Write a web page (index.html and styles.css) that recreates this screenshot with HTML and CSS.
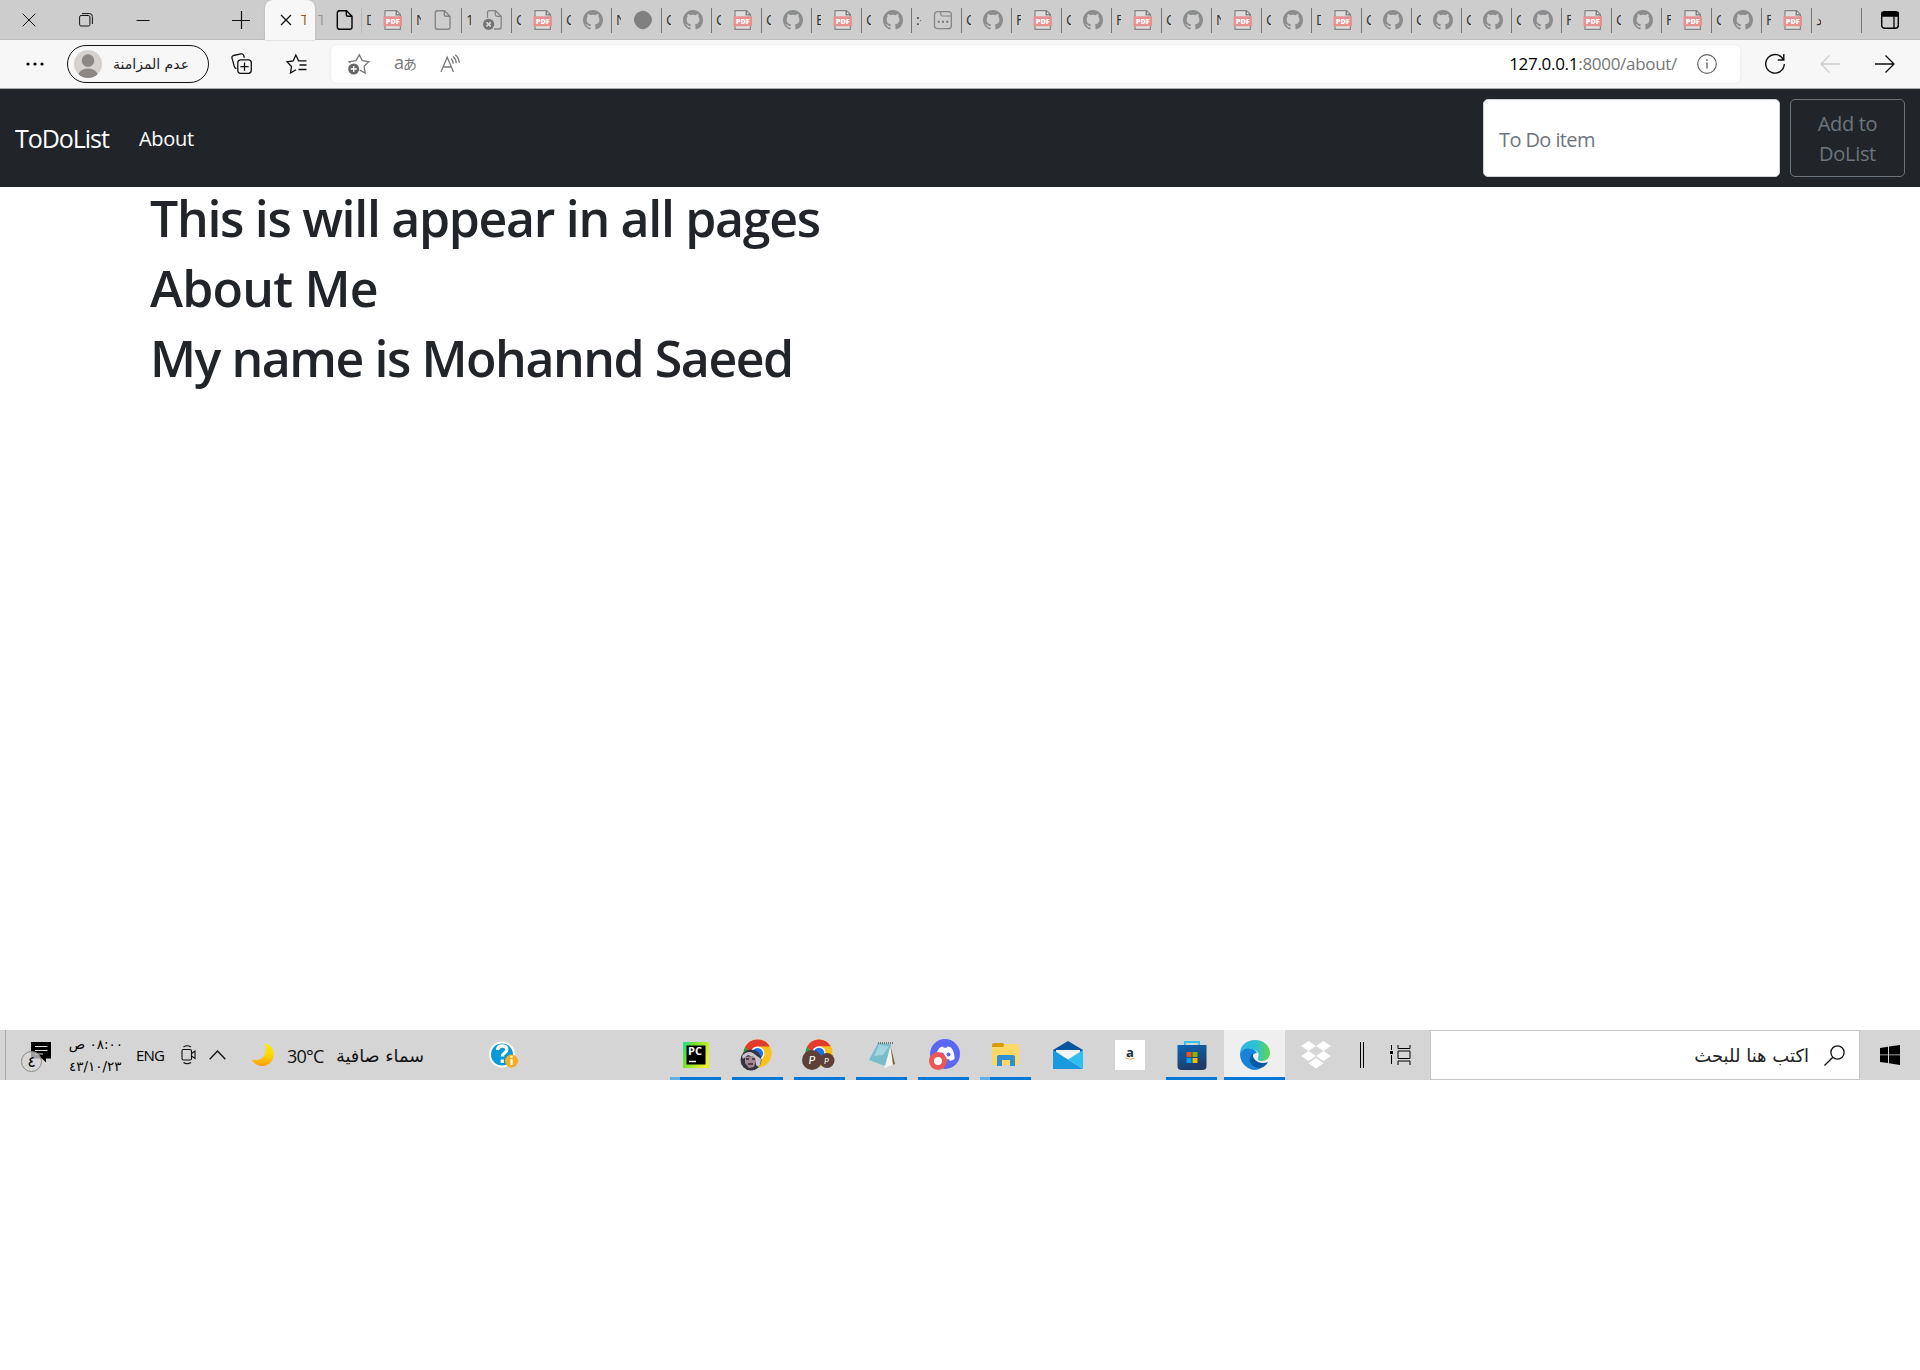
FILE: index.html
```html
<!DOCTYPE html>
<html lang="en">
<head>
<meta charset="utf-8">
<title>ToDoList</title>
<link rel="stylesheet" href="styles.css">
</head>
<body>
<svg class="defs" width="0" height="0">
  <symbol id="github" viewBox="0 0 16 16"><path fill="#8b8c8e" fill-rule="evenodd" d="M8 0C3.58 0 0 3.58 0 8c0 3.54 2.29 6.53 5.47 7.59.4.07.55-.17.55-.38 0-.19-.01-.82-.01-1.49-2.01.37-2.53-.49-2.69-.94-.09-.23-.48-.94-.82-1.13-.28-.15-.68-.52-.01-.53.63-.01 1.08.58 1.23.82.72 1.21 1.87.87 2.33.66.07-.52.28-.87.51-1.07-1.78-.2-3.64-.89-3.64-3.95 0-.87.31-1.59.82-2.15-.08-.2-.36-1.02.08-2.12 0 0 .67-.21 2.2.82.64-.18 1.32-.27 2-.27s1.36.09 2 .27c1.53-1.04 2.2-.82 2.2-.82.44 1.1.16 1.92.08 2.12.51.56.82 1.27.82 2.15 0 3.07-1.87 3.75-3.65 3.95.29.25.54.73.54 1.48 0 1.07-.01 1.93-.01 2.2 0 .21.15.46.55.38A8.01 8.01 0 0 0 16 8c0-4.42-3.58-8-8-8z"/></symbol>
  <symbol id="pdf" viewBox="0 0 20 20"><path d="M2 .6h11.5L17.4 4.500V19.400H2z" fill="#dedede" stroke="#858585" stroke-width="1.200"/><path d="M13.200.6v4.200h4.200" fill="none" stroke="#777" stroke-width="1.300"/><path fill="#e99191" d="M.5 6.300h18.500v9.900H.5z"/><text x="9.800" y="13.800" text-anchor="middle" textLength="14" lengthAdjust="spacingAndGlyphs" font-family="Open Sans, sans-serif" font-size="7.200" font-weight="800" fill="#fff">PDF</text></symbol>
  <symbol id="file" viewBox="0 0 20 20"><path d="M4.500.7h7L17 6.200V17q0 2.300-2.200 2.300H4.500q-2.200 0-2.200-2.300V3Q2.300.7 4.500.7zM11.300.9v3.600q0 1.800 1.800 1.800h3.700" fill="none" stroke="currentColor" stroke-width="1.400"/></symbol>
  <symbol id="filex" viewBox="0 0 20 20"><path d="M4.500 8V2.700Q4.500.7 6.500.7h6L18.200 6.200V17q0 2-2 2H11M12.300.9v3.600q0 1.800 1.800 1.800h4" fill="none" stroke="#858585" stroke-width="1.300"/><circle cx="5.600" cy="14.300" r="5.600" fill="#757575"/><path d="M3.500 12.200l4.200 4.200m0-4.200l-4.200 4.200" stroke="#ddd" stroke-width="1.500"/></symbol>
  <symbol id="dot" viewBox="0 0 20 20"><path fill="#808080" d="M10 .8c4 0 9 4.500 9 9s-5 9.400-9 9.400-9-4-9-9.400S6 .8 10 .8z"/></symbol>
  <symbol id="win" viewBox="0 0 20 20"><rect x="1.500" y="1.700" width="16.800" height="17" rx="3" fill="none" stroke="#858585" stroke-width="1.300"/><path d="M7.800 2v2.500q0 1.500 1.500 1.500h9" fill="none" stroke="#858585" stroke-width="1.200"/><path d="M4.700 11.800h2m2.300 0h2m2.300 0h2" stroke="#757575" stroke-width="2"/></symbol>
  <symbol id="chrome" viewBox="0 0 30 30"><circle cx="15" cy="15" r="14.500" fill="#fbc116"/><path fill="#e33b2e" d="M2.400 7.800A14.500 14.500 0 0 1 27.600 7.800H15L9 18z"/><path fill="#1d9c50" d="M2.400 7.800A14.500 14.500 0 0 0 14 29.500L20 19 9 18z"/><circle cx="15" cy="15" r="7.200" fill="#fff"/><circle cx="15" cy="15" r="5.700" fill="#1a73e8"/></symbol>
</svg>

<header class="tabbar">
  <div class="window-controls">
    <svg width="14" height="14" viewBox="0 0 14 14"><path d="M.7.7l12.600 12.600m0-12.600L.7 13.300" stroke="#111"/></svg>
    <svg width="14" height="14" viewBox="0 0 14 14"><path d="M.6 4q0-1.500 1.500-1.500h7.300q1.500 0 1.500 1.500v7.500q0 1.500-1.500 1.500H2.100Q.6 13 .6 11.500zM3 .6h7.500q2.900 0 2.900 2.900V11" fill="none" stroke="#111"/></svg>
    <svg width="14" height="14" viewBox="0 0 14 14"><path d="M.5 7.500h13" stroke="#111"/></svg>
    <svg width="18" height="18" viewBox="0 0 18 18"><path d="M0 9.500h18M9.500 0v18" stroke="#111" stroke-width="1.200"/></svg>
  </div>
  <div class="tab-active">
    <svg width="12" height="12" viewBox="0 0 12 12"><path d="M1 1l10 10m0-10L1 11" stroke="#111" stroke-width="1.300"/></svg>
    <span class="clip">T</span>
  </div>
  <div class="tab first"><span class="clip">T</span><svg class="ti dark"><use href="#file"/></svg></div>
  <div class="tab light"><span class="clip">D</span><svg class="ti"><use href="#pdf"/></svg></div>
  <div class="tab"><span class="clip">N</span><svg class="ti"><use href="#file"/></svg></div>
  <div class="tab"><span class="clip">1</span><svg class="ti"><use href="#filex"/></svg></div>
  <div class="tab"><span class="clip">C</span><svg class="ti"><use href="#pdf"/></svg></div>
  <div class="tab"><span class="clip">C</span><svg class="ti"><use href="#github"/></svg></div>
  <div class="tab"><span class="clip">N</span><svg class="ti"><use href="#dot"/></svg></div>
  <div class="tab"><span class="clip">C</span><svg class="ti"><use href="#github"/></svg></div>
  <div class="tab"><span class="clip">C</span><svg class="ti"><use href="#pdf"/></svg></div>
  <div class="tab"><span class="clip">C</span><svg class="ti"><use href="#github"/></svg></div>
  <div class="tab"><span class="clip">E</span><svg class="ti"><use href="#pdf"/></svg></div>
  <div class="tab"><span class="clip">C</span><svg class="ti"><use href="#github"/></svg></div>
  <div class="tab"><span class="clip">:-</span><svg class="ti"><use href="#win"/></svg></div>
  <div class="tab"><span class="clip">C</span><svg class="ti"><use href="#github"/></svg></div>
  <div class="tab"><span class="clip">F</span><svg class="ti"><use href="#pdf"/></svg></div>
  <div class="tab"><span class="clip">C</span><svg class="ti"><use href="#github"/></svg></div>
  <div class="tab"><span class="clip">F</span><svg class="ti"><use href="#pdf"/></svg></div>
  <div class="tab"><span class="clip">C</span><svg class="ti"><use href="#github"/></svg></div>
  <div class="tab"><span class="clip">N</span><svg class="ti"><use href="#pdf"/></svg></div>
  <div class="tab"><span class="clip">C</span><svg class="ti"><use href="#github"/></svg></div>
  <div class="tab"><span class="clip">D</span><svg class="ti"><use href="#pdf"/></svg></div>
  <div class="tab"><span class="clip">C</span><svg class="ti"><use href="#github"/></svg></div>
  <div class="tab"><span class="clip">C</span><svg class="ti"><use href="#github"/></svg></div>
  <div class="tab"><span class="clip">C</span><svg class="ti"><use href="#github"/></svg></div>
  <div class="tab"><span class="clip">C</span><svg class="ti"><use href="#github"/></svg></div>
  <div class="tab"><span class="clip">F</span><svg class="ti"><use href="#pdf"/></svg></div>
  <div class="tab"><span class="clip">C</span><svg class="ti"><use href="#github"/></svg></div>
  <div class="tab"><span class="clip">F</span><svg class="ti"><use href="#pdf"/></svg></div>
  <div class="tab"><span class="clip">C</span><svg class="ti"><use href="#github"/></svg></div>
  <div class="tab"><span class="clip">F</span><svg class="ti"><use href="#pdf"/></svg></div>
  <div class="tab"><span class="clip">د</span></div>
  <div class="tab last"><svg width="18" height="18" viewBox="0 0 18 18"><rect x=".7" y=".7" width="16.600" height="16.600" rx="3" fill="none" stroke="#000" stroke-width="1.400"/><path d="M1 1.500h16V5H1zM13 5v12" stroke="#000" stroke-width="1.300"/></svg></div>
</header>

<div class="toolbar">
  <svg class="more" width="18" height="4" viewBox="0 0 18 4"><circle cx="2" cy="2" r="1.600"/><circle cx="9" cy="2" r="1.600"/><circle cx="16" cy="2" r="1.600"/></svg>
  <div class="profile">
    <svg width="28" height="28" viewBox="0 0 28 28"><clipPath id="av"><circle cx="14" cy="14" r="14"/></clipPath><g clip-path="url(#av)"><path fill="#d5d2cf" d="M0 0h28v28H0z"/><circle cx="14" cy="10.500" r="6.300" fill="#8c8784"/><ellipse cx="14" cy="26" rx="10" ry="7.500" fill="#8c8784"/></g></svg>
    <span dir="rtl">عدم المزامنة</span>
  </div>
  <svg class="collections" width="22" height="22" viewBox="0 0 22 22" fill="none" stroke="#111" stroke-width="1.300"><path d="M5.500 15.500Q3.800 15.400 3.300 13.300L1 5.200Q.5 3.200 2.500 2.500L10 .9q2-.4 2.700 1.500l.7 2.300"/><rect x="6.800" y="6.800" width="13.500" height="13.500" rx="3"/><path d="M13.500 9.500v8.200M9.400 13.600h8.200"/></svg>
  <svg class="favorites" width="22" height="20" viewBox="0 0 22 20" fill="none" stroke="#111" stroke-width="1.300"><path d="M10 15.800L4.500 19l1-6.500L1 7.800l6.200-.9L9.800 1l2.800 5.900H20.500M13.500 11H20.500M12.500 15.500h8"/></svg>
  <div class="address">
    <svg width="22" height="21" viewBox="0 0 22 21"><path d="M2.500 9L1.200 7.600l6.800-1L11.300.9l3 5.700 6.500 1-4.700 4.700 1.100 6.700-5.500-2.800" fill="none" stroke="#777" stroke-width="1.300"/><circle cx="5.700" cy="15" r="5.500" fill="#666"/><path d="M5.700 12v6m-3-3h6" stroke="#fff" stroke-width="1.300"/></svg>
    <span class="translate">a<small>あ</small></span>
    <svg class="read" width="20" height="20" viewBox="0 0 20 20" fill="none" stroke="#777" stroke-width="1.300"><path d="M1 18L7.200 3.200 13.500 18M3.200 13h8M11 4.500q2.300 2.300 2.200 5.300M13 2.500q3.300 2.800 3.200 6.700M15.200.8Q19 4 19.300 8.800"/></svg>
    <span class="url"><b>127.0.0.1</b>:8000/about/</span>
    <svg class="info" width="20" height="20" viewBox="0 0 20 20"><circle cx="10" cy="10" r="9.300" fill="none" stroke="#666" stroke-width="1.200"/><path d="M10 8.500v6M10 5.200v1.700" stroke="#666" stroke-width="1.400"/></svg>
  </div>
  <svg class="reload" width="20" height="20" viewBox="0 0 20 20"><path d="M18.500 6A9.300 9.300 0 1 0 19.300 10M18.800 0v6h-6" fill="none" stroke="#111" stroke-width="1.400"/></svg>
  <svg class="back" width="20" height="18" viewBox="0 0 20 18"><path d="M20 9H1M9.500.5L1 9l8.500 8.500" fill="none" stroke="#ccc" stroke-width="1.300"/></svg>
  <svg class="forward" width="20" height="18" viewBox="0 0 20 18"><path d="M0 9h19M10.500.5L19 9l-8.500 8.500" fill="none" stroke="#111" stroke-width="1.300"/></svg>
</div>

<nav class="navbar">
  <a class="brand">ToDoList</a>
  <a class="link">About</a>
  <form class="add-form">
    <input class="field" type="text" placeholder="To Do item">
    <button class="add" type="button">Add to<br>DoList</button>
  </form>
</nav>

<main class="content">
  <h1>This is will appear in all pages</h1>
  <h1 class="about">About Me</h1>
  <h1 class="name">My name is Mohannd Saeed</h1>
</main>

<footer class="taskbar">
  <div class="tray">
    <svg class="notes" width="30" height="32" viewBox="0 0 30 32"><path d="M10 3h20v16.500h-5v4l-4-4H10z"/><path d="M14 7.500h12.500M14 11.500h12.500M14 15h8" stroke="#ddd"/><circle cx="10.500" cy="22.500" r="10" fill="#d5d5d5" fill-opacity=".75" stroke="#888"/><text x="10.500" y="28" text-anchor="middle" font-family="DejaVu Sans, sans-serif" font-size="16">٤</text></svg>
    <div class="clock"><span dir="rtl">٠٨:٠٠ ص</span><span class="date">٤٣/١٠/٢٣</span></div>
    <span class="lang">ENG</span>
    <svg class="meet" width="16" height="20" viewBox="0 0 16 20" fill="none" stroke="#111" stroke-width="1.100"><rect x="1" y="4.500" width="9.500" height="10.500" rx="1.500"/><path d="M10.500 8.500l3.500-2.500v7.500l-3.500-2.500M2.500 2Q6-.5 10 2M2.500 17.500q3.500 2.500 7.500 0"/></svg>
    <svg class="chev" width="17" height="10" viewBox="0 0 17 10"><path d="M.7 9.300L8.500 1l7.800 8.300" fill="none" stroke="#111" stroke-width="1.300"/></svg>
    <svg class="moon" width="24" height="26" viewBox="0 0 24 26"><defs><linearGradient id="mg" x2="0" y2="1"><stop stop-color="#ffed00"/><stop offset=".5" stop-color="#ffd800"/><stop offset="1" stop-color="#ff9c12"/></linearGradient></defs><path fill="url(#mg)" d="M14 1c6 2 9.500 7 8.500 13-1 7-6.500 10.500-12 10-4.500-.4-8-2.700-9.500-6.500 6 1.500 11-.5 13-5.500 1.600-4 1-8 0-11z"/></svg>
    <span class="temp">30°C</span>
    <span class="weather" dir="rtl">سماء صافية</span>
    <svg class="help" width="30" height="28" viewBox="0 0 30 28"><circle cx="13" cy="13.500" r="13" fill="#fff"/><circle cx="13" cy="13.500" r="11" fill="#0a98d6"/><path d="M8.500 9q.5-4 4.800-4 4.500 0 4.500 3.800 0 2-2.300 3.400-2 1.200-2 3.300M13.300 18.500v3.500" fill="none" stroke="#fff" stroke-width="3.300"/><circle cx="22.500" cy="20" r="6.500" fill="#f6ad1b"/><path d="M22.500 18v6M22.500 14.700v2" stroke="#fff" stroke-width="2.200"/></svg>
  </div>
  <div class="apps">
    <div class="app run multi"><svg width="26" height="26" viewBox="0 0 26 26"><defs><linearGradient id="pc" x2="1" y2=".5"><stop stop-color="#14e29a"/><stop offset=".35" stop-color="#70e02c"/><stop offset="1" stop-color="#e7ef2a"/></linearGradient></defs><path fill="url(#pc)" d="M0 0h26v26H0z"/><path d="M3.500 3.500h19v19h-19z"/><text x="5" y="13" textLength="14" lengthAdjust="spacingAndGlyphs" fill="#fff" font-family="Open Sans, sans-serif" font-weight="700" font-size="10">PC</text><path d="M6 19.500h7" stroke="#fff" stroke-width="1.400"/></svg></div>
    <div class="app run shifted"><svg width="34" height="32" viewBox="0 0 34 32"><use href="#chrome" x="4" y="0" width="29" height="29"/><clipPath id="ph"><circle cx="12" cy="21" r="10.500"/></clipPath><g clip-path="url(#ph)"><path fill="#34343e" d="M0 10h25v22H0z"/><path fill="#c7c2d0" d="M3 17q5-6 11-3l8 6-1 9-4-3-1-7-7-3-5 4z"/><path fill="#a58791" d="M6 18l8-1 3 4-2 7-5 1-4-5z"/><path d="M7 20h3m3 0h3m-7 5h5" stroke="#302b35" stroke-width="1.300"/></g></svg></div>
    <div class="app run shifted"><svg width="34" height="32" viewBox="0 0 34 32"><use href="#chrome" x="4" y="0" width="28" height="28"/><circle cx="26" cy="21.500" r="7.500" fill="#5d4138"/><circle cx="11" cy="21" r="10" fill="#5d4138"/><g fill="#fff" font-family="Lato, sans-serif" font-style="italic"><text x="7.500" y="25" font-size="12">P</text><text x="23" y="24.500" font-size="8.500">P</text></g></svg></div>
    <div class="app run"><svg width="28" height="28" viewBox="0 0 28 28"><path fill="#7b633d" d="M22 3l5 20-8 3z"/><path fill="#f4f4f1" d="M22 2l3 22-8 3-2-4z"/><path fill="#78bdcc" d="M10 2l13 1-6 22L1 19z"/><path fill="#a2d5dd" d="M11 4l10 1-6 9-9 1z"/><path d="M10 2h15" stroke="#777" stroke-width="2" stroke-dasharray="1 1"/></svg></div>
    <div class="app run"><svg width="32" height="32" viewBox="0 0 32 32"><circle cx="17" cy="15" r="15" fill="#5967f2"/><path fill="#fff" d="M12 8.500q2-1 3-1l.6 1.300h3L19.200 7.500q1.800.2 3.800 1 4 5 3.500 11.500-2 1.600-4.500 2l-1-1.700H13l-1 1.700q-2-.4-4-2Q7.500 13 12 8.500z"/><circle cx="14" cy="15.500" r="2" fill="#5967f2"/><circle cx="20.500" cy="15.500" r="2" fill="#5967f2"/><circle cx="10" cy="22" r="9" fill="#ed5557"/><circle cx="10" cy="22" r="4" fill="#fff"/></svg></div>
    <div class="app run multi"><svg width="28" height="24" viewBox="0 0 28 24"><path fill="#d89b08" d="M0 2q0-2 2-2h9l2 3v5H0z"/><path fill="#ffd766" d="M0 4h11l2-3h12q2 0 2 2v19H0z"/><path fill="#2f8fd5" d="M5 23V14q0-2 2-2h14q2 0 2 2v9h-5v-6h-8v6z"/></svg></div>
    <div class="app"><svg width="30" height="28" viewBox="0 0 30 28"><path fill="#0756a0" d="M0 9L15 0l15 9v7H0z"/><path fill="#f4f4f4" d="M3 9h24v11H3z"/><path fill="#1a99df" d="M0 9l30 19H0z"/><path fill="#31bff0" d="M30 9L15 18.500 30 28z"/></svg></div>
    <div class="app"><svg width="30" height="30" viewBox="0 0 30 30"><path fill="#fff" d="M0 0h30v30H0z"/><text x="15" y="17" text-anchor="middle" font-family="Open Sans, sans-serif" font-weight="700" font-size="13" fill="#232f3e">a</text><path d="M10.500 18q4.500 2.500 9 0" fill="none" stroke="#f5a94e"/></svg></div>
    <div class="app run"><svg width="30" height="30" viewBox="0 0 30 30"><defs><linearGradient id="st" x2=".4" y2="1"><stop stop-color="#0968b7"/><stop offset="1" stop-color="#203a68"/></linearGradient></defs><path d="M8 6V2h14v4" fill="none" stroke="#36c3f4" stroke-width="2"/><path fill="url(#st)" d="M.5 5h29v21q0 4-4 4h-21q-4 0-4-4z"/><path fill="#f25022" d="M9.500 12h5v5h-5z"/><path fill="#7fba00" d="M15.500 12h5v5h-5z"/><path fill="#00a4ef" d="M9.500 18h5v5h-5z"/><path fill="#ffb900" d="M15.500 18h5v5h-5z"/></svg></div>
    <div class="app run current"><svg width="30" height="30" viewBox="0 0 30 30"><defs><linearGradient id="eg"><stop stop-color="#2cb5ec"/><stop offset=".55" stop-color="#2fc2cf"/><stop offset="1" stop-color="#61d64d"/></linearGradient></defs><path fill="url(#eg)" d="M0 14C0 5 7 0 15 0c9 0 15 6 15 13 0 5-4 8-8 8-3 0-5-1-4-3 2-5-1-8-5-8z"/><path fill="#1682d8" d="M0 14q4-7 11-5 5 1 6 4-5 0-5 6 0 7 9 9-6 4-13 0Q0 23 0 14z"/><path fill="#0c59a4" d="M13 13q-6 6-1 12 4 4 9 3 5-2 7-6-5 2-10 0-6-3-5-9z"/></svg></div>
    <div class="app"><svg width="30" height="28" viewBox="0 0 30 28"><path fill="#fff" d="M7.500 0L15 5 7.500 10 0 5zM22.500 0L30 5l-7.500 5L15 5zM7.500 10l7.500 5-7.500 5L0 15zM22.500 10l7.500 5-7.500 5-7.500-5zM7.500 22L15 17l7.500 5-7.500 5.500z"/></svg></div>
  </div>
  <div class="view">
    <svg width="4" height="26" viewBox="0 0 4 26"><path d="M.5 0v26M3.500 0v26" stroke="#000"/></svg>
    <svg width="21" height="20" viewBox="0 0 21 20" fill="none" stroke="#000"><path d="M1.500 0v5M1.500 10v9M8 0v3.500h12V0M8 20v-4h12v4"/><path d="M8 6h12v7.500H8z"/><path d="M0 7.500h3" stroke-width="3"/></svg>
  </div>
  <div class="search"><span dir="rtl">اكتب هنا للبحث</span><svg width="21" height="21" viewBox="0 0 21 21"><circle cx="13.500" cy="7.500" r="6.600" fill="none" stroke="#111" stroke-width="1.300"/><path d="M8.800 12.200L.5 20.500" stroke="#111" stroke-width="1.300"/></svg></div>
  <div class="start"><svg width="20" height="20" viewBox="0 0 20 20"><path d="M0 3l8-1.200v7.700H0zM9 1.600L20 0v9.500H9zM0 10.300h8v7.700L0 17zM9 10.300h11V20L9 18.300z"/></svg></div>
</footer>
</body>
</html>
```
FILE: styles.css
```css
* { box-sizing: border-box; }
body { margin: 0; background: #fff; font-family: "Open Sans", "Noto Sans", sans-serif; color: #212529; }
svg { display: block; flex: none; overflow: visible; }
.defs { position: absolute; }

.tabbar { height: 40px; background: #cdcdcd; display: flex; border-bottom: 1px solid #bcbcbc; }
.window-controls { width: 265px; flex: none; display: flex; align-items: center; padding-left: 22px; }
.window-controls svg + svg { margin-left: 43px; }
.window-controls svg:last-child { margin-left: 82px; }
.tab-active { width: 50px; height: 40px; flex: none; background: #f7f7f7; border-radius: 8px 8px 0 0; display: flex; align-items: center; padding-left: 15px; box-shadow: 0 0 2px #aaa; }
.tab-active .clip { margin-left: 9px; color: #9a5a20; }
.tab { width: 50px; flex: none; display: flex; align-items: center; position: relative; color: #858585; padding-left: 5px; }
.tab::before { content: ""; position: absolute; left: -.5px; top: 8px; width: 1.500px; height: 25px; background: #757575; }
.tab.light::before { background: #b9b9b9; }
.tab.first { width: 46px; padding-left: 3px; }
.tab.first::before { display: none; }
.tab.first .ti { margin-left: 12px; }
.tab.last { padding-left: 20px; }
.clip { width: 5px; overflow: hidden; font-size: 14px; line-height: 20px; color: #35332f; white-space: nowrap; }
.tab.first .clip { color: #999; }
.ti { width: 20px; height: 20px; margin-left: 12px; }
.dark { color: #000; }

.toolbar { height: 49px; background: #f7f7f7; border-bottom: 1px solid #aaa; display: flex; align-items: center; padding-left: 26px; }
.profile { margin-left: 23px; width: 142px; height: 38px; border: 1.500px solid #111; border-radius: 19px; display: flex; align-items: center; padding-left: 6px; flex: none; }
.profile span { font: 14px/20px "DejaVu Sans", sans-serif; width: 76px; margin-left: 11px; white-space: nowrap; color: #222; }
.collections { margin-left: 22px; }
.favorites { margin-left: 33px; }
.address { margin-left: 23px; width: 1409px; height: 38px; background: #fff; border-radius: 6px; box-shadow: 0 0 3px #e4e4e4; display: flex; align-items: center; padding: 0 23px 0 17px; flex: none; }
.translate { font: 18px/22px "Open Sans", "Noto Sans CJK JP", sans-serif; color: #777; width: 22px; margin-left: 24px; padding-bottom: 3px; letter-spacing: -1px; white-space: nowrap; }
.translate small { font-size: 14px; }
.read { margin-left: 24px; }
.url { margin-left: auto; padding-bottom: 2px; font-size: 17px; letter-spacing: -.3px; color: #767676; white-space: nowrap; }
.url b { font-weight: 400; color: #000; }
.info { margin-left: 20px; }
.reload { margin-left: 25px; }
.back { margin-left: 35px; }
.forward { margin-left: 35px; }

.navbar { height: 98px; background: #212529; display: flex; align-items: center; padding: 0 15px; }
.brand { font-size: 25px; color: #fff; width: 124px; letter-spacing: -1.050px; }
.link { font-size: 20px; color: #fff; letter-spacing: -.3px; }
.add-form { margin-left: auto; display: flex; gap: 10px; }
.field { width: 297px; height: 78px; border: 1px solid #ced4da; border-radius: 5px; padding: 2px 15px 0; font: 20px "Open Sans", sans-serif; letter-spacing: -.6px; background: #fff; }
.field::placeholder { color: #6c757d; opacity: 1; }
.add { width: 115px; height: 78px; border: 1px solid #6c757d; border-radius: 5px; background: transparent; color: #6c757d; font: 20px/30px "Open Sans", sans-serif; letter-spacing: -.3px; padding: 2px 0 0; }

.content { height: 843px; padding: 1px 0 0 150px; }
.content h1 { margin: 0 0 10px; font-size: 50px; line-height: 60px; font-weight: 600; letter-spacing: -1.300px; white-space: nowrap; width: max-content; }
.content .about { letter-spacing: -.8px; }
.content .name { letter-spacing: -1.450px; }

.taskbar { height: 50px; background: #d5d5d5; display: flex; align-items: center; }
.tray { width: 660px; height: 50px; flex: none; display: flex; align-items: center; margin-left: 5px; padding-left: 15px; border-left: 1px solid #aaa; }
.clock { width: 54px; margin-left: 18px; display: flex; flex-direction: column; font: 13.500px/22px "DejaVu Sans", sans-serif; color: #000; white-space: nowrap; }
.clock .date { direction: ltr; unicode-bidi: bidi-override; }
.lang { margin-left: 13px; width: 29px; font-size: 15px; letter-spacing: -.8px; color: #000; }
.meet { margin-left: 16px; }
.chev { margin-left: 12px; }
.moon { margin-left: 25px; }
.temp { margin-left: 12px; width: 38px; padding-top: 2px; font-size: 18px; letter-spacing: -.8px; color: #111; white-space: nowrap; }
.weather { margin-left: 11px; width: 88px; padding-top: 2px; font: 17.700px "DejaVu Sans", sans-serif; color: #111; white-space: nowrap; }
.help { margin-left: 65px; }
.apps { display: flex; flex: none; }
.app { width: 62px; height: 50px; display: flex; align-items: center; justify-content: center; position: relative; }
.app.shifted { padding-right: 4px; }
.app.run::after { content: ""; position: absolute; left: 5px; bottom: 0; width: 51px; height: 3px; background: #0078d7; }
.app.multi::after { background: linear-gradient(90deg, #62aee8 10px, #0078d7 10px); }
.app.current { background: #efefef; width: 61px; margin: 0 0 0 1px; }
.app.current::after { left: 0; width: 61px; }
.view { width: 83px; flex: none; display: flex; align-items: center; gap: 26px; padding-left: 13px; }
.search { width: 430px; height: 50px; flex: none; background: #fff; border: 1px solid #c5c5c5; display: flex; align-items: center; justify-content: flex-end; padding-right: 14px; gap: 15px; font: 18px "DejaVu Sans", sans-serif; color: #222; white-space: nowrap; }
.start { width: 60px; display: flex; justify-content: center; }
```
